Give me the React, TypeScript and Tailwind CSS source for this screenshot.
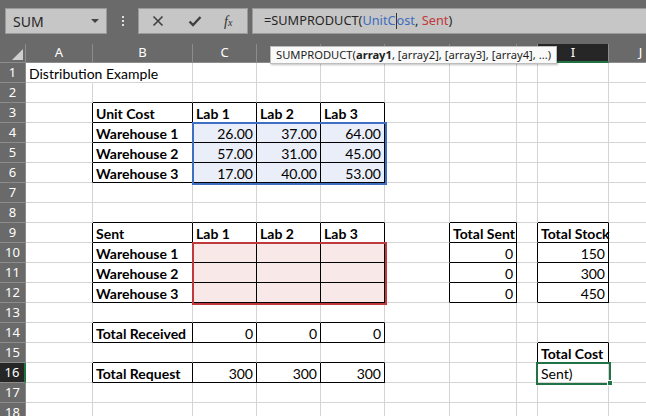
import React from 'react'

type Cell = { t?: string; b?: boolean; r?: boolean }

const COLS = [
  { k: 'A', w: 67 },
  { k: 'B', w: 100 },
  { k: 'C', w: 64 },
  { k: 'D', w: 64 },
  { k: 'E', w: 64 },
  { k: 'F', w: 65 },
  { k: 'G', w: 67 },
  { k: 'H', w: 21 },
  { k: 'I', w: 71 },
  { k: 'J', w: 64 },
]
const ROWS = Array.from({ length: 18 }, (_, i) => i + 1)

const data: Record<string, Cell> = {
  A1: { t: 'Distribution Example' },
  B3: { t: 'Unit Cost', b: true }, C3: { t: 'Lab 1', b: true }, D3: { t: 'Lab 2', b: true }, E3: { t: 'Lab 3', b: true },
  B4: { t: 'Warehouse 1', b: true }, C4: { t: '26.00', r: true }, D4: { t: '37.00', r: true }, E4: { t: '64.00', r: true },
  B5: { t: 'Warehouse 2', b: true }, C5: { t: '57.00', r: true }, D5: { t: '31.00', r: true }, E5: { t: '45.00', r: true },
  B6: { t: 'Warehouse 3', b: true }, C6: { t: '17.00', r: true }, D6: { t: '40.00', r: true }, E6: { t: '53.00', r: true },
  B9: { t: 'Sent', b: true }, C9: { t: 'Lab 1', b: true }, D9: { t: 'Lab 2', b: true }, E9: { t: 'Lab 3', b: true },
  B10: { t: 'Warehouse 1', b: true }, B11: { t: 'Warehouse 2', b: true }, B12: { t: 'Warehouse 3', b: true },
  G9: { t: 'Total Sent', b: true }, G10: { t: '0', r: true }, G11: { t: '0', r: true }, G12: { t: '0', r: true },
  I9: { t: 'Total Stock', b: true }, I10: { t: '150', r: true }, I11: { t: '300', r: true }, I12: { t: '450', r: true },
  B14: { t: 'Total Received', b: true }, C14: { t: '0', r: true }, D14: { t: '0', r: true }, E14: { t: '0', r: true },
  B16: { t: 'Total Request', b: true }, C16: { t: '300', r: true }, D16: { t: '300', r: true }, E16: { t: '300', r: true },
  I15: { t: 'Total Cost', b: true }, I16: { t: 'Sent)' },
}

// ranges with thin black borders: [col from, col to, row from, row to]
const boxed: [number, number, number, number][] = [
  [1, 4, 3, 6], [1, 4, 9, 12], [6, 6, 9, 12], [8, 8, 9, 12], [1, 4, 14, 14], [1, 4, 16, 16], [8, 8, 15, 15],
]
const isBoxed = (c: number, r: number) =>
  boxed.some(([c1, c2, r1, r2]) => c >= c1 && c <= c2 && r >= r1 && r <= r2)

const fillOf = (c: number, r: number) => {
  if (c >= 2 && c <= 4 && r >= 4 && r <= 6) return 'bg-[#e9eef8]'
  if (c >= 2 && c <= 4 && r >= 10 && r <= 12) return 'bg-[#f8e8e8]'
  return 'bg-white'
}

const uiFont = { fontFamily: '"Noto Sans", "Open Sans", sans-serif' }
const cellFont = { fontFamily: 'Lato, "Liberation Sans", sans-serif' }

function Toolbar() {
  return (
    <div className="h-[44px] bg-[#6a6a6a] flex items-start pt-[8px] pl-[5px]" style={uiFont}>
      <div className="w-[102px] h-[26px] bg-[#c6c6c6] border border-[#9a9a9a] flex items-center justify-between pl-[7px] pr-[7px]">
        <span className="text-[14px] text-[#262626]">SUM</span>
        <span className="w-0 h-0 border-l-[4px] border-r-[4px] border-t-[4px] border-l-transparent border-r-transparent border-t-[#444]" />
      </div>
      <div className="w-[31px] h-[26px] flex flex-col items-center justify-center gap-[2px]">
        <span className="w-[2px] h-[2px] bg-[#e0e0e0]" />
        <span className="w-[2px] h-[2px] bg-[#e0e0e0]" />
        <span className="w-[2px] h-[2px] bg-[#e0e0e0]" />
      </div>
      <div className="w-[110px] h-[26px] bg-[#c6c6c6] border border-[#9a9a9a] flex items-center">
        <svg width="12" height="12" viewBox="0 0 12 12" className="ml-[13px]">
          <path d="M1.5 1.5 L10.5 10.5 M10.5 1.5 L1.5 10.5" stroke="#404040" strokeWidth="1.6" />
        </svg>
        <svg width="14" height="12" viewBox="0 0 14 12" className="ml-[24px]">
          <path d="M1.5 6.5 L5 10 L12.5 2" stroke="#404040" strokeWidth="2.4" fill="none" />
        </svg>
        <span className="ml-[22px] text-[14px] italic text-[#303030]" style={{ fontFamily: '"Liberation Serif", serif' }}>
          f<span className="text-[10px]">x</span>
        </span>
      </div>
      <div className="flex-1 ml-[4px] h-[26px] bg-[#c6c6c6] border border-r-0 border-[#9a9a9a] flex items-center pl-[11px] text-[12.75px] text-[#262626] whitespace-nowrap">
        =SUMPRODUCT(<span className="text-[#3d6cc0]">UnitC</span>
        <span className="inline-block w-px h-[16px] bg-[#333]" />
        <span className="text-[#3d6cc0]">ost</span>,&nbsp;<span className="text-[#c0393b]">Sent</span>)
      </div>
    </div>
  )
}

function HeaderRow() {
  return (
    <div className="flex h-[19px] bg-[#6a6a6a]" style={uiFont}>
      <div className="w-[26px] shrink-0 border-r border-b border-[#8c8c8c] flex items-end justify-end pr-[2px] pb-[2px]">
        <span className="w-0 h-0 border-l-[11px] border-b-[11px] border-l-transparent border-b-[#cfcfcf]" />
      </div>
      {COLS.map((c) => {
        const active = c.k === 'I'
        return (
          <div key={c.k} style={{ width: c.w }}
            className={`shrink-0 flex items-center justify-center text-[13px] text-white border-r border-[#8c8c8c] ${active ? 'bg-[#262626] border-b-2 border-b-[#217346]' : 'border-b'}`}>
            {c.k}
          </div>
        )
      })}
    </div>
  )
}

function SheetRow({ r }: { r: number }) {
  const active = r === 16
  return (
    <div className="flex h-[20px]">
      <div style={uiFont}
        className={`w-[26px] shrink-0 flex items-center justify-center text-[13px] text-white border-b border-[#8c8c8c] ${active ? 'bg-[#262626] border-r-2 border-r-[#217346]' : 'bg-[#6a6a6a] border-r'}`}>
        {r}
      </div>
      {COLS.map((col, ci) => {
        const cell = data[col.k + r]
        const right = (isBoxed(ci, r) || isBoxed(ci + 1, r)) ? 'border-r-black' : (col.k === 'A' && r === 1 ? 'border-r-white' : 'border-r-[#d4d4d4]')
        const bottom = (isBoxed(ci, r) || isBoxed(ci, r + 1)) ? 'border-b-black' : 'border-b-[#d4d4d4]'
        return (
          <div key={col.k} style={{ width: col.w, ...cellFont }}
            className={`shrink-0 border-r border-b ${right} ${bottom} ${fillOf(ci, r)} flex items-end px-[3px] text-[14px] leading-[16px] text-black whitespace-nowrap ${cell?.r ? 'justify-end' : 'justify-start'} ${cell?.b ? 'font-bold' : ''}`}>
            {cell?.t && <span className="relative z-10">{cell.t}</span>}
          </div>
        )
      })}
    </div>
  )
}

export default function App() {
  return (
    <div className="relative w-[646px] h-[416px] overflow-hidden bg-white">
      <Toolbar />
      <HeaderRow />
      <div className="relative">
        {ROWS.map((r) => <SheetRow key={r} r={r} />)}
        {/* range outlines from the formula */}
        <div className="absolute z-20 left-[192px] top-[59px] w-[195px] h-[63px] border-2 border-[#3f6fc2]" />
        <div className="absolute z-20 left-[192px] top-[179px] w-[195px] h-[63px] border-2 border-[#c0393d]" />
        {/* active cell */}
        <div className="absolute z-20 left-[536px] top-[299px] w-[75px] h-[23px] border-2 border-[#217346]" />
        <div className="absolute z-20 left-[607px] top-[317px] w-[6px] h-[6px] bg-[#217346] border border-white" />
      </div>
      {/* function tooltip */}
      <div className="absolute z-30 left-[270px] top-[46px] h-[18px] px-[5px] flex items-center bg-[#f9f9f9] border border-[#bdbdbd] shadow-[1px_1px_2px_rgba(0,0,0,0.25)] text-[11.2px] text-[#1e1e1e] whitespace-nowrap" style={uiFont}>
        SUMPRODUCT(<b>array1</b>, [array2], [array3], [array4], ...)
      </div>
    </div>
  )
}
